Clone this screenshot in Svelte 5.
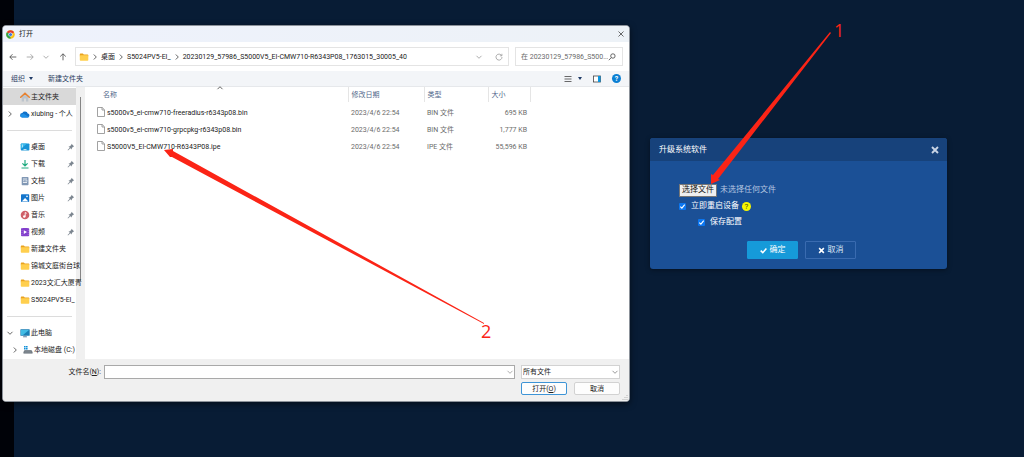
<script>
  const places = [
    { name: '桌面', icon: 'desktop', pinned: true },
    { name: '下载', icon: 'download', pinned: true },
    { name: '文档', icon: 'document', pinned: true },
    { name: '图片', icon: 'picture', pinned: true },
    { name: '音乐', icon: 'music', pinned: true },
    { name: '视频', icon: 'video', pinned: true },
    { name: '新建文件夹', icon: 'folder' },
    { name: '锦城文庭街台球', icon: 'folder' },
    { name: '2023文汇大厦青', icon: 'folder' },
    { name: 'S5024PV5-EI_', icon: 'folder' }
  ];

  const files = [
    { name: 's5000v5_ei-cmw710-freeradius-r6343p08.bin', date: '2023/4/6 22:54', type: 'BIN 文件', size: '695 KB' },
    { name: 's5000v5_ei-cmw710-grpcpkg-r6343p08.bin', date: '2023/4/6 22:54', type: 'BIN 文件', size: '1,777 KB' },
    { name: 'S5000V5_EI-CMW710-R6343P08.ipe', date: '2023/4/6 22:54', type: 'IPE 文件', size: '55,596 KB' }
  ];

  const crumbs = ['桌面', 'S5024PV5-EI_', '20230129_57986_S5000V5_EI-CMW710-R6343P08_1763015_30005_40'];

  let picker;
  let restart = $state(true);
  let save = $state(true);
  let filename = $state('');
</script>

{#snippet chevron(dir)}
  <svg class="chev {dir}" viewBox="0 0 8 8" aria-hidden="true"><path d="M2.8 1.5 5.3 4 2.8 6.5" /></svg>
{/snippet}

{#snippet icon(kind)}
  <svg class="icon" viewBox="0 0 10 10" aria-hidden="true">
    {#if kind === 'home'}
      <path d="M1.700 4.500v5h2.300V6.400h2v3.100h2.300v-5L5 1.500z" fill="#bcc4cc" />
      <path d="M.7 5.300 5 1.200l4.300 4.100" fill="none" stroke="#e8812f" stroke-width="1.500" stroke-linecap="round" />
    {:else if kind === 'cloud'}
      <path d="M2.300 8.400a2.200 2.200 0 0 1 0-4.400 3.100 3.100 0 0 1 5.500.5A2 2 0 0 1 8 8.400z" fill="#1272c9" />
      <path d="M2 8.400C.7 8 .2 6.900.4 6l3-1.600 5.500 3.500-.9.500z" fill="#1f90e6" />
    {:else if kind === 'desktop'}
      <rect x=".8" y="1.500" width="8.600" height="7" rx=".8" fill="#1793d6" />
      <path d="M.8 7V2.300A.8.8 0 0 1 1.600 1.500H7z" fill="#3cb9ea" />
      <path d="M2 3.200h1M2 4.800h1M3.500 7.600h3" stroke="#fff" stroke-width=".8" />
    {:else if kind === 'download'}
      <path d="M5 1v5.600M2.400 4.300 5 6.900l2.600-2.600M1.500 9h7" fill="none" stroke="#21ab80" stroke-width="1.200" />
    {:else if kind === 'document'}
      <rect x="1.700" y="1" width="6.800" height="8.200" rx=".7" fill="#8198b5" />
      <path d="M3 3h4M3 4.800h1.500M3 6.500h4" stroke="#fff" stroke-width=".8" />
      <path d="M5.400 4.200h2v1.400h-2z" fill="#dfe8f2" />
    {:else if kind === 'picture'}
      <rect x="1" y="1.300" width="8.200" height="7.700" rx=".7" fill="#1476cc" />
      <path d="m1.800 8.600 3.300-3.700 3.300 3.700z" fill="#fff" />
      <circle cx="7" cy="3.400" r=".8" fill="#fff" />
    {:else if kind === 'music'}
      <circle cx="5" cy="5" r="4.300" fill="#cf6069" />
      <path d="M5.200 6.500V2.500l1.500.8" fill="none" stroke="#fff" stroke-width=".9" />
      <circle cx="4.300" cy="6.500" r="1.200" fill="#fff" />
    {:else if kind === 'video'}
      <rect x="1" y="1" width="8.200" height="8.200" rx="1" fill="#8340cc" />
      <path d="M2 1v8M8.200 1v8" stroke="#b58ae6" stroke-width=".7" stroke-dasharray="1" />
      <path d="M3.800 3.200v3.800l3.200-1.900z" fill="#fff" />
    {:else if kind === 'folder'}
      <path d="M.8 2.200c0-.5.200-.7.700-.7h2.300l1 1.100h3.800c.4 0 .7.300.7.700v1H.8z" fill="#e9a21d" />
      <rect x=".8" y="3.200" width="8.500" height="5.600" rx=".7" fill="#ffcf4e" />
    {:else if kind === 'computer'}
      <rect x=".4" y="1.300" width="9.300" height="6.400" rx=".5" fill="#1a7fb5" />
      <path d="M1 1.900h8L3 7.100H1z" fill="#42bce4" />
      <path d="M3 8.800h4M5 7.500v1.200" stroke="#66809a" stroke-width=".9" />
    {:else if kind === 'drive'}
      <path d="M1 .9h1.600v1.600H1zM3 .9h1.600v1.600H3zM1 2.900h1.600v1.600H1zM3 2.900h1.600v1.600H3z" fill="#1290d8" />
      <path d="M1.500 5.200h7l1 1.700v1.600h-9V6.900z" fill="#59636c" />
      <path d="M1.200 7h7.600" stroke="#cdd4da" stroke-width=".6" />
    {/if}
  </svg>
{/snippet}

<main class="desktop">
  <section class="explorer" aria-label="打开">
    <header class="titlebar">
      <svg class="chrome" viewBox="0 0 20 20" aria-hidden="true">
        <circle cx="10" cy="10" r="9.500" fill="#fbc116" />
        <path d="M10 10 1.770 5.250a9.500 9.500 0 0 1 16.460 0z" fill="#e33b2e" />
        <path d="M10 10v9.500A9.500 9.500 0 0 1 1.770 5.250z" fill="#2da14c" />
        <circle cx="10" cy="10" r="4.700" fill="#fff" />
        <circle cx="10" cy="10" r="3.600" fill="#3b78e0" />
      </svg>
      <h1>打开</h1>
      <button class="bare close" aria-label="关闭">
        <svg viewBox="0 0 8 8"><path d="m1.500 1.500 5 5m0-5-5 5" /></svg>
      </button>
    </header>

    <div class="navbar">
      <div class="history">
        <button class="bare" aria-label="后退"><svg viewBox="0 0 8 8"><path d="M7.300 4H.9M3.500 1.200.8 4l2.700 2.800" /></svg></button>
        <button class="bare dim" aria-label="前进"><svg viewBox="0 0 8 8"><path d="M.7 4h6.400M4.500 1.200 7.200 4 4.500 6.800" /></svg></button>
        <button class="bare dim" aria-label="最近位置">{@render chevron('down')}</button>
        <button class="bare" aria-label="上移"><svg viewBox="0 0 8 8"><path d="M4 7.300V.9M1.200 3.500 4 .8l2.800 2.700" /></svg></button>
      </div>
      <div class="address">
        {@render icon('folder')}
        {#each crumbs as crumb}
          <span class="sep">{@render chevron('right')}</span>
          <button class="bare crumb">{crumb}</button>
        {/each}
        <button class="bare dim push" aria-label="历史记录">{@render chevron('down')}</button>
        <button class="bare dim reload" aria-label="刷新"><svg viewBox="0 0 8 8"><path d="M6.600 2.600A3 3 0 1 0 7 4M6.900.8v2H4.900" /></svg></button>
      </div>
      <div class="search">
        <input type="text" aria-label="搜索" placeholder="在 20230129_57986_S500..." />
        <button class="bare" aria-label="搜索"><svg viewBox="0 0 8 8"><circle cx="4.900" cy="3" r="2.200" /><path d="M3.300 4.600.8 7.200" /></svg></button>
      </div>
    </div>

    <div class="toolbar">
      <button class="bare organize">组织 <i class="caret"></i></button>
      <button class="bare">新建文件夹</button>
      <button class="bare push" aria-label="视图"><svg viewBox="0 0 8 8"><path d="M.5 1.500h7M.5 4h7M.5 6.500h7" /></svg><i class="caret"></i></button>
      <button class="bare" aria-label="预览窗格"><svg viewBox="0 0 8 8"><rect x=".5" y="1" width="7" height="6" fill="#fff" /><path d="M5 1h2.500v6H5z" fill="#0a95df" stroke="none" /></svg></button>
      <button class="bare help" aria-label="帮助">?</button>
    </div>

    <div class="panes">
      <nav class="sidebar" aria-label="位置">
        <ul>
          <li><button class="place current"><span class="twist"></span>{@render icon('home')}<span>主文件夹</span></button></li>
          <li><button class="place"><span class="twist">{@render chevron('right')}</span>{@render icon('cloud')}<span>xiubing - 个人</span></button></li>
        </ul>
        <hr />
        <ul>
          {#each places as place}
            <li>
              <button class="place">
                <span class="twist"></span>{@render icon(place.icon)}<span class="label">{place.name}</span>
                {#if place.pinned}
                  <svg class="pin" viewBox="0 0 8 8" aria-hidden="true"><path d="M4.500.8 7.200 3.500l-1 .2-1.300 1.400-.2 1.500-1.300-1.300L1 7.500.6 7l2.200-2.300L1.500 3.400l1.500-.2 1.300-1.400z" /></svg>
                {/if}
              </button>
            </li>
          {/each}
        </ul>
        <hr />
        <ul>
          <li><button class="place"><span class="twist">{@render chevron('down')}</span>{@render icon('computer')}<span>此电脑</span></button></li>
          <li><button class="place child"><span class="twist">{@render chevron('right')}</span>{@render icon('drive')}<span>本地磁盘 (C:)</span></button></li>
        </ul>
      </nav>
      <div class="track" aria-hidden="true"><span></span></div>
      <div class="files">
        <table>
          <colgroup><col /><col class="date" /><col class="type" /><col class="size" /><col class="rest" /></colgroup>
          <thead>
            <tr><th class="sorted">名称<span>{@render chevron('up')}</span></th><th>修改日期</th><th>类型</th><th>大小</th><td></td></tr>
          </thead>
          <tbody>
            {#each files as file}
              <tr>
                <td class="name">
                  <svg viewBox="0 0 8 10" aria-hidden="true"><path d="M.5.500h4.700l2.300 2.300v6.700h-7zM5 .5v2.500h2.500" /></svg>{file.name}
                </td>
                <td>{file.date}</td>
                <td>{file.type}</td>
                <td class="num">{file.size}</td>
                <td></td>
              </tr>
            {/each}
          </tbody>
        </table>
      </div>
    </div>

    <footer>
      <label for="filename">文件名(<u>N</u>):</label>
      <div class="combo">
        <input id="filename" type="text" bind:value={filename} />
        <button class="bare dim" aria-label="文件名列表">{@render chevron('down')}</button>
      </div>
      <div class="combo filter dim">
        <select aria-label="文件类型"><option>所有文件</option></select>
        {@render chevron('down')}
      </div>
      <div class="actions">
        <button class="primary">打开(<u>O</u>)</button>
        <button>取消</button>
      </div>
      <svg class="grip" viewBox="0 0 6 6" aria-hidden="true"><path d="M5 1v1M3 3v1M5 3v1M1 5v1M3 5v1M5 5v1" /></svg>
    </footer>
  </section>

  <section class="upgrade" aria-label="升级系统软件">
    <header>
      <h2>升级系统软件</h2>
      <button class="bare" aria-label="关闭"><svg viewBox="0 0 8 8"><path d="m1 1 6 6m0-6L1 7" /></svg></button>
    </header>
    <form onsubmit={(e) => e.preventDefault()}>
      <div class="row">
        <button type="button" class="choose" onclick={() => picker.click()}>选择文件</button>
        <input type="file" hidden aria-label="选择文件" bind:this={picker} />
        <span class="none">未选择任何文件</span>
      </div>
      <div class="row">
        <label><input type="checkbox" bind:checked={restart} />立即重启设备</label>
        <span class="tip">?</span>
      </div>
      <div class="row nested">
        <label><input type="checkbox" bind:checked={save} />保存配置</label>
      </div>
      <div class="buttons">
        <button type="submit" class="ok"><svg viewBox="0 0 8 8"><path d="M.8 4.200 3.200 6.500 7.300 1.800" /></svg>确定</button>
        <button type="button"><svg viewBox="0 0 8 8"><path d="m1.300 1.300 5.400 5.400m0-5.400L1.300 6.700" /></svg>取消</button>
      </div>
    </form>
  </section>

  <svg class="notes" width="1024" height="457" aria-hidden="true">
    <path d="M830 32 713 175l-2-1V184l9-4-2-1L831 33z" />
    <path d="M484 323 173 151V149L164 150 170 157H172L484 324z" />
    <text x="834" y="37">1</text>
    <text x="481" y="338">2</text>
  </svg>
</main>

<style>
  :global(body) {
    margin: 0;
    background: #081c35;
  }
  * {
    box-sizing: border-box;
  }
  .desktop {
    position: relative;
    display: grid;
    grid-template-columns: minmax(0, 1fr) 297px;
    gap: 20px;
    align-items: start;
    min-height: 100vh;
    padding: 25px 77px 25px 2px;
    overflow: hidden;
    background: linear-gradient(90deg, #000208 14px, #081c35 14px);
    font: 7px/12px Roboto, 'Noto Sans CJK SC', sans-serif;
    color: #222;
  }
  button,
  input,
  select {
    font: inherit;
    color: inherit;
    margin: 0;
  }
  h1,
  h2 {
    margin: 0;
    font: inherit;
  }
  ul {
    list-style: none;
    margin: 0;
    padding: 0;
  }
  .bare {
    display: flex;
    align-items: center;
    padding: 0;
    border: 0;
    background: none;
    white-space: nowrap;
  }
  .bare svg {
    width: 8px;
    height: 8px;
    fill: none;
    stroke: #444;
    stroke-width: 0.8;
  }
  .chev {
    width: 8px;
    height: 8px;
    flex: none;
    fill: none;
    stroke: #666;
    stroke-width: 1;
  }
  .dim svg {
    stroke: #999;
  }
  .down {
    transform: rotate(90deg);
  }
  .up {
    transform: rotate(-90deg);
  }
  .push {
    margin-left: auto;
  }
  .icon {
    width: 10px;
    height: 10px;
    flex: none;
  }

  .explorer {
    border: 1px solid #8c929a;
    border-radius: 4px;
    overflow: hidden;
    background: #fff;
    box-shadow: 0 2px 6px #0008;
  }
  .titlebar {
    display: flex;
    align-items: center;
    gap: 4px;
    height: 16px;
    padding: 0 4px 0 3px;
    background: linear-gradient(90deg, #eef2fc, #edf2f7);
  }
  .chrome {
    width: 9px;
    height: 9px;
  }
  .close {
    margin-left: auto;
  }
  .navbar {
    display: flex;
    align-items: center;
    height: 29px;
    padding: 0 6px;
  }
  .history {
    display: flex;
    justify-content: space-between;
    width: 58px;
    margin-right: 8px;
  }
  .address,
  .search {
    display: flex;
    align-items: center;
    height: 19px;
    border: 1px solid #e4e4e4;
    background: #fff;
  }
  .address {
    flex: 1;
    min-width: 0;
    gap: 3px;
    padding: 0 5px 0 3px;
    overflow: hidden;
  }
  .sep {
    display: flex;
    margin: 0 -1px;
  }
  .reload {
    margin-left: 9px;
  }
  .search {
    width: 108px;
    margin-left: 6px;
    padding: 0 6px 0 5px;
    color: #666;
  }
  .search input {
    flex: 1;
    min-width: 0;
    padding: 0;
    border: 0;
    outline: 0;
    background: none;
  }
  .search input::placeholder {
    color: #6a6a6a;
    opacity: 1;
  }
  .toolbar {
    display: flex;
    align-items: center;
    gap: 11px;
    height: 16px;
    padding: 0 8px;
    background: #f3f5f8;
    border-bottom: 1px solid #e6e8eb;
    color: #2b4060;
  }
  .organize {
    margin-right: 4px;
  }
  .caret {
    margin-left: 4px;
    border: 2px solid transparent;
    border-top: 3px solid #1f3a66;
    border-bottom: 0;
  }
  .toolbar .push .caret {
    margin-left: 6px;
  }
  .toolbar .help {
    justify-content: center;
    width: 9px;
    height: 9px;
    border-radius: 50%;
    background: #0b7fd3;
    color: #fff;
    font-weight: 700;
  }

  .panes {
    display: flex;
    height: 272px;
  }
  .sidebar {
    position: relative;
    z-index: 1;
    width: 73px;
    padding: 1px 0;
  }
  .place {
    display: flex;
    align-items: center;
    width: 100%;
    height: 17px;
    padding: 0 1px 0 3px;
    border: 0;
    background: none;
    white-space: nowrap;
  }
  .place.current {
    background: #d9d9d9;
  }
  .place.child {
    padding-left: 8px;
  }
  .twist {
    display: flex;
    flex: none;
    width: 14px;
  }
  .child .twist {
    width: 12px;
  }
  .place .icon {
    margin-right: 1px;
  }
  .label {
    flex: 1;
    min-width: 0;
    text-align: left;
  }
  .pin {
    width: 8px;
    height: 8px;
    fill: #7d8791;
  }
  hr {
    height: 1px;
    margin: 8px 4px 7px;
    border: 0;
    background: #dcdcdc;
  }
  .track {
    width: 9px;
    background: #f0f0f0;
  }
  .track span {
    display: block;
    width: 1px;
    height: 184px;
    margin: 10px 0 0 4px;
    background: #858585;
  }
  .files {
    flex: 1;
    min-width: 0;
  }
  table {
    width: 100%;
    border-collapse: collapse;
    table-layout: fixed;
    color: #6b6b6b;
  }
  .date {
    width: 76px;
  }
  .type {
    width: 64px;
  }
  .size {
    width: 42px;
  }
  .rest {
    width: 99px;
  }
  th {
    position: relative;
    height: 15px;
    padding: 0 3px;
    border-right: 1px solid #e5e5e5;
    font-weight: 400;
    text-align: left;
    color: #52698c;
  }
  th:first-child {
    padding-left: 18px;
  }
  .sorted span {
    position: absolute;
    top: -3px;
    left: 50%;
    display: flex;
  }
  td {
    height: 17px;
    padding: 0 3px;
    white-space: nowrap;
  }
  thead td {
    height: 15px;
  }
  tbody tr:first-child td {
    height: 19px;
    padding-top: 2px;
  }
  .name {
    padding-left: 12px;
    color: #222;
  }
  .name svg {
    width: 8px;
    height: 10px;
    margin-right: 2px;
    vertical-align: -2px;
    fill: #fff;
    stroke: #8a8a8a;
    stroke-width: 0.8;
  }
  .num {
    text-align: right;
  }

  footer {
    position: relative;
    display: grid;
    grid-template-columns: 98px minmax(0, 1fr) 105px;
    gap: 3px 0;
    padding: 6px 9px 6px 0;
    background: #f0f0f0;
  }
  footer label {
    line-height: 14px;
    text-align: right;
  }
  .combo {
    display: flex;
    align-items: center;
    height: 14px;
    margin-left: 3px;
    border: 1px solid #a9a9a9;
    background: #fff;
  }
  .combo input {
    flex: 1;
    min-width: 0;
    height: 12px;
    padding: 0 3px;
    border: 0;
    outline: 0;
  }
  .filter {
    margin-left: 6px;
    border-color: #d2d2d2;
  }
  .combo select {
    flex: 1;
    appearance: none;
    padding: 0 1px;
    border: 0;
    background: none;
  }
  .actions {
    grid-column: 3;
    display: grid;
    grid-template-columns: 1fr 1fr;
    gap: 7px;
    margin-left: 6px;
  }
  .actions button {
    height: 13px;
    padding: 0;
    border: 1px solid #d2d2d2;
    border-radius: 2px;
    background: #fdfdfd;
    line-height: 10px;
  }
  .actions .primary {
    border-color: #3d94d6;
  }
  .grip {
    position: absolute;
    right: 1px;
    bottom: 1px;
    width: 6px;
    height: 6px;
    stroke: #b5b5b5;
  }

  .upgrade {
    margin-top: 113px;
    border-radius: 3px;
    overflow: hidden;
    background: #1b5096;
    box-shadow: 0 1px 5px #0006;
    font-size: 8px;
    color: #fff;
  }
  .upgrade header {
    display: flex;
    align-items: center;
    justify-content: space-between;
    height: 23px;
    padding: 0 8px 0 9px;
    background: #17427b;
  }
  .upgrade header svg {
    stroke: #c9d4e5;
    stroke-width: 1.9;
  }
  form {
    padding: 21px 29px 10px;
  }
  .row {
    display: flex;
    align-items: center;
    height: 16px;
    gap: 3px;
  }
  .nested {
    padding-left: 19px;
  }
  .row label {
    display: flex;
    align-items: center;
    gap: 5px;
  }
  .choose {
    height: 13px;
    padding: 0 2px;
    border: 1px solid #777;
    background: #efefef;
    color: #111;
    line-height: 10px;
  }
  .none {
    color: #b5c6e0;
  }
  .row input[type='checkbox'] {
    width: 7px;
    height: 7px;
    appearance: none;
    border-radius: 1px;
    background: #fff;
  }
  .row input[type='checkbox']:checked {
    background: #0b76f0 url("data:image/svg+xml,%3Csvg xmlns='http://www.w3.org/2000/svg' viewBox='0 0 7 7'%3E%3Cpath d='M1.300 3.600 2.900 5.200 5.700 1.700' fill='none' stroke='white' stroke-width='1.100'/%3E%3C/svg%3E");
  }
  .tip {
    width: 9px;
    height: 9px;
    border-radius: 50%;
    background: #f7f700;
    color: #45520a;
    line-height: 9px;
    text-align: center;
  }
  .buttons {
    display: flex;
    justify-content: center;
    gap: 7px;
    margin-top: 11px;
    padding-left: 6px;
  }
  .buttons button {
    display: flex;
    align-items: center;
    justify-content: center;
    gap: 3px;
    width: 51px;
    height: 18px;
    padding: 0;
    border: 1px solid #3a6bb0;
    border-radius: 1px;
    background: none;
    color: #dbe5f3;
  }
  .buttons .ok {
    border-color: #169ad9;
    background: #169ad9;
    color: #fff;
  }
  .buttons svg {
    width: 7px;
    height: 7px;
    fill: none;
    stroke: #fff;
    stroke-width: 1.8;
  }

  .notes {
    position: absolute;
    top: 0;
    left: 0;
    pointer-events: none;
    fill: #fb2416;
    font-family: 'Open Sans', sans-serif;
    font-size: 18px;
  }
</style>
